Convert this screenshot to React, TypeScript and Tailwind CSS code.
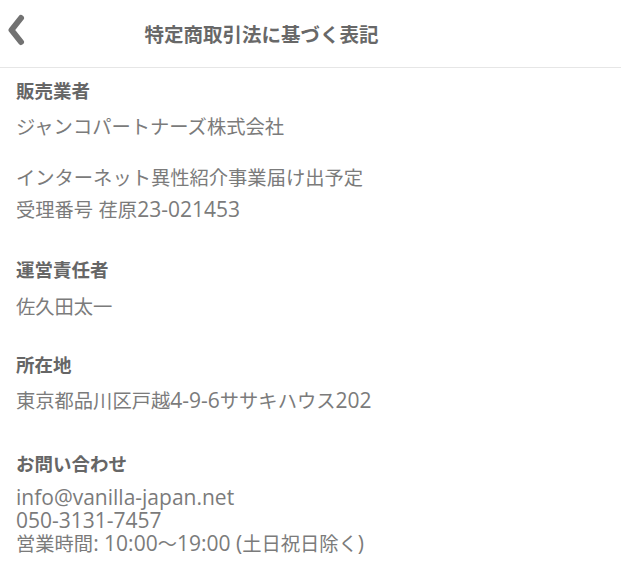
import React from "react";

const font = { fontFamily: '"Open Sans", "Noto Sans CJK JP", sans-serif' };

function Mixed({ text }: { text: string }) {
  const parts = text.match(/[\x20-\x7e]+|[^\x20-\x7e]+/g) || [];
  return (
    <>
      {parts.map((p, i) =>
        /^[\x20-\x7e]+$/.test(p) ? (
          <span key={i} className="text-[21px] leading-none">{p}</span>
        ) : (
          <span key={i} className="text-[19.3px] leading-none" style={{ fontFamily: '"Noto Sans CJK JP", sans-serif' }}>{p}</span>
        )
      )}
    </>
  );
}

function Label({ children, className = "" }: { children: React.ReactNode; className?: string }) {
  return (
    <div
      className={`text-[18.5px] leading-[24px] font-bold text-[#666666] ${className}`}
      style={{ fontFamily: '"Noto Sans CJK JP", sans-serif' }}
    >
      {children}
    </div>
  );
}

function Line({ text, className = "" }: { text: string; className?: string }) {
  return (
    <div className={`h-[23px] text-[19px] leading-[23px] text-[#7b7b7b] whitespace-nowrap ${className}`}>
      <Mixed text={text} />
    </div>
  );
}

export default function App() {
  return (
    <div className="w-[621px] h-[576px] bg-white overflow-hidden" style={font}>
      <header className="relative h-[68px] border-b border-[#e6e6e6] flex items-center justify-center pr-[98px]">
        <button className="absolute left-[5px] top-[14px] w-[22px] h-[32px] flex items-center justify-center">
          <svg width="20" height="32" viewBox="0 0 20 32">
            <path d="M15 4 L5.5 16 L15 28" fill="none" stroke="#727272" strokeWidth="6" strokeLinecap="round" strokeLinejoin="round" />
          </svg>
        </button>
        <h1
          className="text-[19.5px] font-bold text-[#686868]"
          style={{ fontFamily: '"Noto Sans CJK JP", sans-serif' }}
        >
          特定商取引法に基づく表記
        </h1>
      </header>

      <main className="px-4 pt-[10px]">
        <section>
          <Label>販売業者</Label>
          <Line className="mt-[14px]" text="ジャンコパートナーズ株式会社" />
          <Line className="mt-[28px]" text="インターネット異性紹介事業届け出予定" />
          <Line className="mt-[9px]" text="受理番号 荏原23-021453" />
        </section>

        <section className="mt-[35px]">
          <Label>運営責任者</Label>
          <Line className="mt-[15px]" text="佐久田太一" />
        </section>

        <section className="mt-[33px]">
          <Label>所在地</Label>
          <Line className="mt-[14px]" text="東京都品川区戸越4-9-6ササキハウス202" />
        </section>

        <section className="mt-[38px]">
          <Label>お問い合わせ</Label>
          <div className="mt-[12px]">
            <Line text="info@vanilla-japan.net" />
            <Line text="050-3131-7457" />
            <Line text="営業時間: 10:00〜19:00 (土日祝日除く)" />
          </div>
        </section>
      </main>
    </div>
  );
}
